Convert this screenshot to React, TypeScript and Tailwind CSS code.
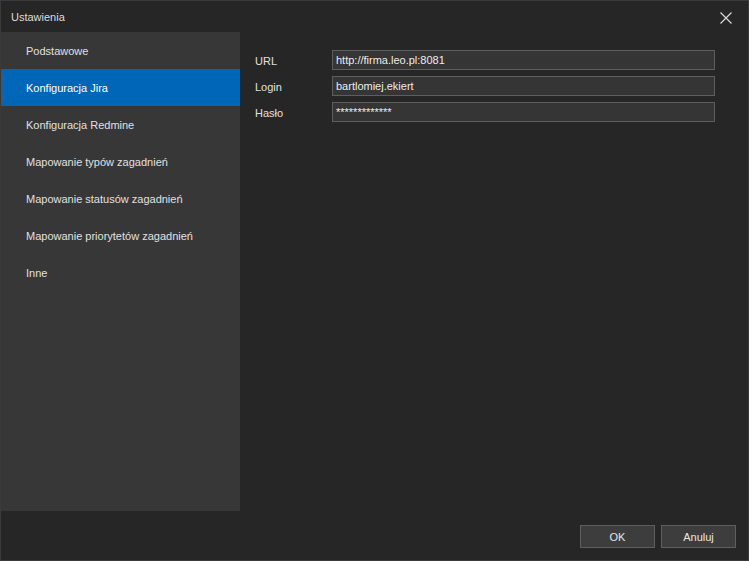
const menuItems = [
  'Podstawowe',
  'Konfiguracja Jira',
  'Konfiguracja Redmine',
  'Mapowanie typów zagadnień',
  'Mapowanie statusów zagadnień',
  'Mapowanie priorytetów zagadnień',
  'Inne',
];

const fields = [
  { label: 'URL', value: 'http://firma.leo.pl:8081' },
  { label: 'Login', value: 'bartlomiej.ekiert' },
  { label: 'Hasło', value: '*************' },
];

export default function App() {
  const selected = 1;

  return (
    <div
      className="w-[749px] h-[561px] bg-[#262626] border border-[#3a3a3a] flex flex-col text-[11px] text-[#e6e6e6] overflow-hidden"
      style={{ fontFamily: 'Tahoma, "Liberation Sans", Arial, sans-serif' }}
    >
      {/* Title bar */}
      <div className="h-[31px] flex items-center justify-between pl-[10px] pr-[16px] pt-[2px] shrink-0">
        <span className="text-[#dcdcdc]">Ustawienia</span>
        <svg width="12" height="12" viewBox="0 0 12 12">
          <path d="M0.5 0.5 L11.5 11.5 M11.5 0.5 L0.5 11.5" stroke="#d8d8d8" strokeWidth="1.2" fill="none" />
        </svg>
      </div>

      <div className="flex h-[479px] shrink-0">
        {/* Sidebar */}
        <div className="w-[239px] bg-[#373737] flex flex-col">
          {menuItems.map((item, i) => (
            <div
              key={item}
              className={`h-[37px] flex items-center pl-[25px] pt-[2px] ${i === selected ? 'bg-[#0066b8] text-white' : 'text-[#e0e0e0]'}`}
            >
              {item}
            </div>
          ))}
        </div>

        {/* Content */}
        <div className="flex-1 pt-[18px] pl-[15px] pr-[33px]">
          <div className="flex flex-col gap-[6px]">
            {fields.map((f) => (
              <div key={f.label} className="flex items-center h-[20px]">
                <span className="w-[77px] pt-[2px] text-[#e0e0e0]">{f.label}</span>
                <div className="flex-1 h-[20px] bg-[#353535] border border-[#5e5e5e] flex items-center px-[3px] pt-[1px] text-[#ececec]">
                  {f.value}
                </div>
              </div>
            ))}
          </div>
        </div>
      </div>

      {/* Footer */}
      <div className="flex-1 flex justify-end items-start pt-[14px] pr-[12px] gap-[6px]">
        <button className="w-[75px] h-[23px] bg-[#3d3d3d] border border-[#5e5e5e] text-[#e6e6e6] pt-[1px]">OK</button>
        <button className="w-[75px] h-[23px] bg-[#3d3d3d] border border-[#5e5e5e] text-[#e6e6e6] pt-[1px]">Anuluj</button>
      </div>
    </div>
  );
}
